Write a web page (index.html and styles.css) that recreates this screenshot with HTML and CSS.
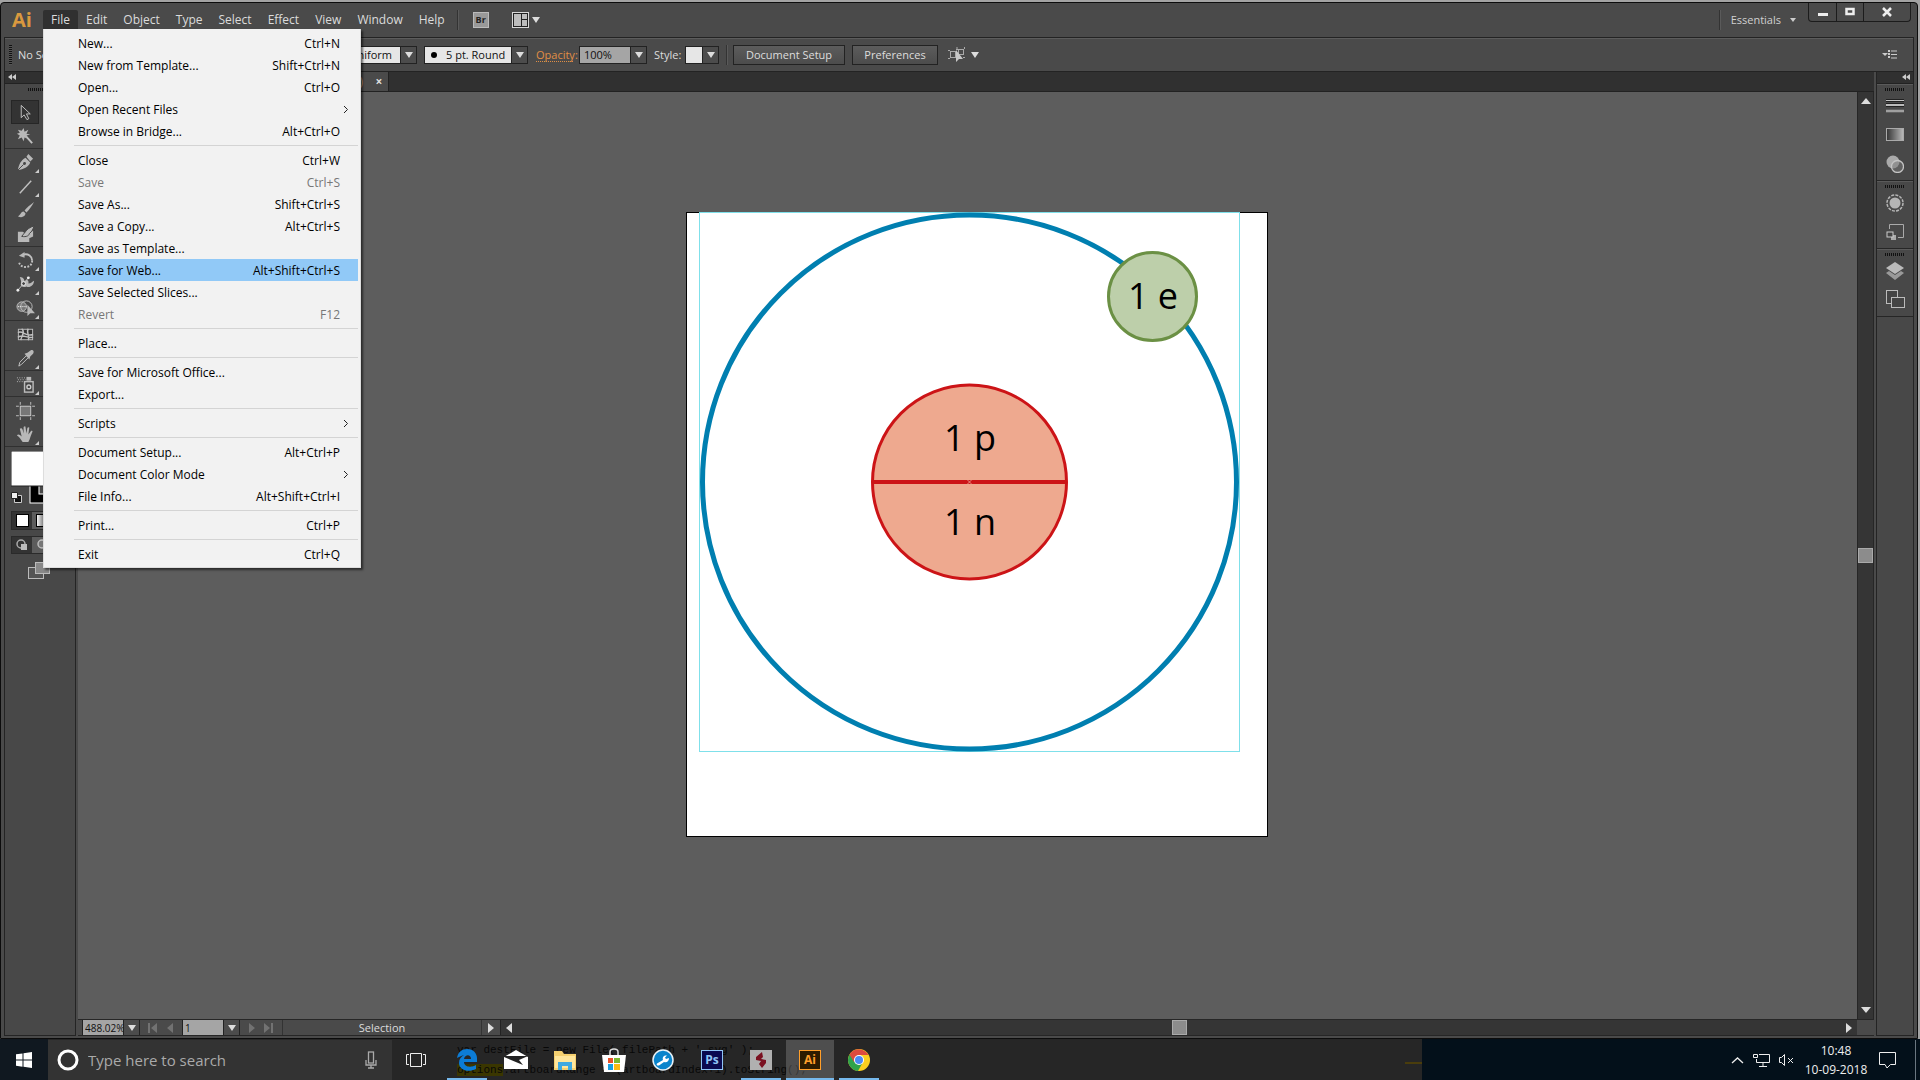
FILE: index.html
```html
<!DOCTYPE html>
<html lang="en">
<head>
<meta charset="utf-8">
<title>Illustrator</title>
<link rel="stylesheet" href="styles.css">
</head>
<body>
<div class="desktop">
<div class="app">
  <header class="menubar">
    <span class="logo">Ai</span>
    <nav class="menus">
      <div class="menu-host">
        <button class="menu-title open">File</button>
        <ul class="dropdown">
          <li><button class="item"><span>New...</span><kbd>Ctrl+N</kbd></button></li>
          <li><button class="item"><span>New from Template...</span><kbd>Shift+Ctrl+N</kbd></button></li>
          <li><button class="item"><span>Open...</span><kbd>Ctrl+O</kbd></button></li>
          <li><button class="item sub"><span>Open Recent Files</span><svg width="6" height="9" viewBox="0 0 6 9"><path d="M1 1l3.500 3.500L1 8"/></svg></button></li>
          <li><button class="item"><span>Browse in Bridge...</span><kbd>Alt+Ctrl+O</kbd></button></li>
          <li class="rule"></li>
          <li><button class="item"><span>Close</span><kbd>Ctrl+W</kbd></button></li>
          <li><button class="item" disabled><span>Save</span><kbd>Ctrl+S</kbd></button></li>
          <li><button class="item"><span>Save As...</span><kbd>Shift+Ctrl+S</kbd></button></li>
          <li><button class="item"><span>Save a Copy...</span><kbd>Alt+Ctrl+S</kbd></button></li>
          <li><button class="item"><span>Save as Template...</span></button></li>
          <li><button class="item active"><span>Save for Web...</span><kbd>Alt+Shift+Ctrl+S</kbd></button></li>
          <li><button class="item"><span>Save Selected Slices...</span></button></li>
          <li><button class="item" disabled><span>Revert</span><kbd>F12</kbd></button></li>
          <li class="rule"></li>
          <li><button class="item"><span>Place...</span></button></li>
          <li class="rule"></li>
          <li><button class="item"><span>Save for Microsoft Office...</span></button></li>
          <li><button class="item"><span>Export...</span></button></li>
          <li class="rule"></li>
          <li><button class="item sub"><span>Scripts</span><svg width="6" height="9" viewBox="0 0 6 9"><path d="M1 1l3.500 3.500L1 8"/></svg></button></li>
          <li class="rule"></li>
          <li><button class="item"><span>Document Setup...</span><kbd>Alt+Ctrl+P</kbd></button></li>
          <li><button class="item sub"><span>Document Color Mode</span><svg width="6" height="9" viewBox="0 0 6 9"><path d="M1 1l3.500 3.500L1 8"/></svg></button></li>
          <li><button class="item"><span>File Info...</span><kbd>Alt+Shift+Ctrl+I</kbd></button></li>
          <li class="rule"></li>
          <li><button class="item"><span>Print...</span><kbd>Ctrl+P</kbd></button></li>
          <li class="rule"></li>
          <li><button class="item"><span>Exit</span><kbd>Ctrl+Q</kbd></button></li>
        </ul>
      </div>
      <button class="menu-title">Edit</button>
      <button class="menu-title">Object</button>
      <button class="menu-title">Type</button>
      <button class="menu-title">Select</button>
      <button class="menu-title">Effect</button>
      <button class="menu-title">View</button>
      <button class="menu-title">Window</button>
      <button class="menu-title">Help</button>
    </nav>
    <span class="vline"></span>
    <button class="bridge" aria-label="Bridge">Br</button>
    <button class="arrange" aria-label="Arrange documents"><svg width="28" height="16" viewBox="0 0 28 16"><rect x="0.500" y="0.500" width="16" height="15" fill="#222" stroke="#d8d8d8"/><rect x="2" y="2" width="7" height="12" fill="#bdbdbd"/><rect x="10" y="2" width="5" height="5" fill="#bdbdbd"/><rect x="10" y="8" width="5" height="6" fill="#bdbdbd"/><path d="M20 5h8l-4 6z" fill="#ddd"/></svg></button>
    <span class="spacer"></span>
    <span class="vline"></span>
    <button class="workspace">Essentials<i class="tri small"></i></button>
    <div class="winbtns">
      <button aria-label="Minimize"><svg width="10" height="10" viewBox="0 0 10 10"><path d="M0 6h10v3H0z" fill="#eee"/></svg></button>
      <button class="max" aria-label="Maximize"><svg width="10" height="10" viewBox="0 0 10 10"><path d="M1.500 2h7v5h-7z" fill="none" stroke="#eee" stroke-width="2.500"/></svg></button>
      <button class="close" aria-label="Close"><svg width="10" height="10" viewBox="0 0 10 10"><path d="M1 1l8 8M9 1L1 9" stroke="#eee" stroke-width="2.500"/></svg></button>
    </div>
  </header>

  <section class="control">
    <span class="vgrip"></span>
    <span class="selection-label">No Selection</span>
    <div class="combo profile"><select aria-label="Profile"><option>Uniform</option></select><i class="drop"></i></div>
    <div class="combo brush"><b class="dot"></b><select aria-label="Brush"><option>5 pt. Round</option></select><i class="drop"></i></div>
    <a class="opacity" href="#">Opacity:</a>
    <div class="combo percent"><input aria-label="Opacity" value="100%"><i class="drop"></i></div>
    <span class="style-label">Style:</span>
    <div class="combo swatch"><button aria-label="Style"></button><i class="drop"></i></div>
    <span class="vline"></span>
    <button class="btn setup">Document Setup</button>
    <button class="btn prefs">Preferences</button>
    <button class="align" aria-label="Select similar"><svg width="31" height="18" viewBox="0 0 31 18"><g fill="none" stroke="#aaa"><rect x="2.500" y="5.500" width="5" height="6"/><rect x="10.500" y="3.500" width="5" height="5"/><path d="M0 4.500h2M0 12.500h2M8 3.500h2M9 1v2M16.500 1v2M15 11.500h2"/></g><path d="M8 4v12l3-3h4z" fill="#c8c8c8"/><path d="M23 6h8l-4 6z" fill="#ddd"/></svg></button>
    <span class="spacer"></span>
    <button class="panelmenu" aria-label="Panel menu"><svg width="15" height="9" viewBox="0 0 15 9"><path d="M0 3h6L3 6z" fill="#ccc"/><path d="M7 0v9" stroke="#ccc" stroke-width="2" stroke-dasharray="2 1"/><path d="M9 1h6M9 4.500h6M9 8h6" stroke="#ccc"/></svg></button>
  </section>

  <main class="work">
    <aside class="tools">
      <div class="dockhead"><svg width="8" height="6" viewBox="0 0 8 6"><path d="M4 0L0 3l4 3zM8 0L4 3l4 3z"/></svg></div>
      <div class="hgrip"></div>
      <div class="group">
        <button class="tool on" aria-label="Selection"><svg viewBox="0 0 20 20"><path d="M5.500 2.500v13l3-3 3 5 2-1-2.500-5H15z" fill="#333" stroke="#c4c4c4"/></svg></button>
        <button class="tool" aria-label="Magic wand"><svg viewBox="0 0 20 20"><path d="M9 8l8 9" stroke-width="2" class="s"/><path class="f" d="M8 1l1 4 4-2-2 4 4 1-4 1 1 3-3-1-1 4-2-4-4 2 2-4-3-2 3-1-2-3 4 1z"/></svg></button>
      </div>
      <div class="group">
        <button class="tool more" aria-label="Pen"><svg viewBox="0 0 20 20"><path class="f" d="M2 18C3 12 5 8 10 5l5 5c-2 5-7 7-13 8zM11 4l2-3 5 5-3 3z"/><path d="M2 18l6-6" stroke="#444"/><circle cx="9" cy="11" r="1.500" fill="#444"/></svg></button>
        <button class="tool more" aria-label="Line"><svg viewBox="0 0 20 20"><path class="s" d="M4 17L16 4" stroke-width="1.500"/></svg></button>
        <button class="tool" aria-label="Paintbrush"><svg viewBox="0 0 20 20"><path class="f" d="M19 1c-4 3-8 6-10 9l2 2c3-3 6-7 8-11zM8 11c-3 0-3 4-6 5 3 2 8 1 8-3z"/></svg></button>
        <button class="tool" aria-label="Blob brush"><svg viewBox="0 0 20 20"><path class="f" d="M2 7h5l3 2h3l5-3v6l-4 2v4H2z"/><path d="M19 1c-4 1-8 4-9 6-1 2-3 3-4 5 5 1 8-1 8-3 3-2 4-5 5-8z" fill="#bbb" stroke="#444"/></svg></button>
      </div>
      <div class="group">
        <button class="tool more" aria-label="Rotate"><svg viewBox="0 0 20 20"><path class="s" d="M7 4c6-2 10 2 10 6" stroke-width="2"/><path class="s" d="M17 10c0 9-13 9-14 1" stroke-width="2" stroke-dasharray="2 1.500"/><path class="f" d="M3 5l6-4v6z"/></svg></button>
        <button class="tool more" aria-label="Width"><svg viewBox="0 0 20 20"><path class="f" d="M4 2c4 0 5 3 5 5 2-3 5-2 4 2 3 0 4-2 6-3 0 5-5 8-8 6-2 1-6 1-6-2 1-3 0-5-1-8z"/><path class="s" d="M2 16L13 3"/><circle cx="8" cy="9" r="2" fill="#444" stroke="#eee"/><circle cx="2" cy="16" r="1.500" fill="#eee"/><circle cx="13" cy="3" r="1.500" fill="#eee"/></svg></button>
        <button class="tool more" aria-label="Shape builder"><svg viewBox="0 0 20 20"><circle cx="6" cy="8" r="5" fill="#777" stroke="#bbb"/><circle cx="11" cy="8" r="6" fill="none" stroke="#bbb"/><path d="M2 8h9" stroke="#fff" stroke-dasharray="1 1"/><path class="f" d="M12 6v12l3-3h5z"/></svg></button>
      </div>
      <div class="group">
        <button class="tool" aria-label="Mesh"><svg viewBox="0 0 20 20"><rect x="2.500" y="4.500" width="15" height="11" fill="#333" stroke="#bbb"/><path class="s" d="M2 8c5-3 8 5 16 2M2 13c5-4 9 1 16 0M6 4c4 3 0 7-1 12M13 4c-3 4 2 7 0 12" stroke-width="1.500"/></svg></button>
        <button class="tool more" aria-label="Eyedropper"><svg viewBox="0 0 20 20"><path d="M3 18l1-4 7-7 2 2-7 7z" fill="#444" stroke="#c4c4c4"/><path class="f" d="M9 5l3-1 4-3c3 0 3 2 2 4l-3 3-1 3z"/></svg></button>
      </div>
      <div class="group">
        <button class="tool more" aria-label="Symbol sprayer"><svg viewBox="0 0 20 20"><rect x="9" y="7" width="9" height="11" fill="#444" stroke="#bbb" stroke-width="1.500"/><circle cx="13.500" cy="12.500" r="2" fill="none" stroke="#ccc" stroke-width="1.500"/><path class="f" d="M11 2h5v4h-5z"/><path d="M1 3h9M2 5h8M1 7h6" stroke="#bbb" stroke-dasharray="1 1.500"/></svg></button>
      </div>
      <div class="group">
        <button class="tool" aria-label="Artboard"><svg viewBox="0 0 20 20"><rect x="4.500" y="5.500" width="11" height="10" fill="#777" stroke="#ccc"/><path class="s" d="M4.500 1v3M15.500 1v3M4.500 17v3M15.500 17v3M0 5.500h3M17 5.500h3M0 15.500h3M17 15.500h3"/></svg></button>
        <button class="tool more" aria-label="Hand"><svg viewBox="0 0 20 20"><path class="f" d="M7 18C5 15 3 12 1 11c1-2 3-1 5 1L4 4c1-1 2-1 3 1l1 4V2c1-1 2-1 2 0l1 7 1-6c1-1 2-1 2 0l-1 7 3-4c1 0 2 0 1 2-2 4-2 7-4 10z"/></svg></button>
      </div>
      <div class="paint">
        <svg width="56" height="54" viewBox="0 0 56 54"><rect x="19" y="18" width="34" height="34" fill="#000" stroke="#fff"/><rect x="28" y="27" width="16" height="16" fill="#484848" stroke="#fff"/><rect x="0" y="0" width="35" height="35" fill="#fff" stroke="#222"/><path d="M3.500 44.500h7v7h-7z" fill="#111" stroke="#ccc"/><path d="M0.500 41.500h6v6h-6z" fill="#eee" stroke="#222"/></svg>
      </div>
      <div class="modes">
        <button aria-label="Color"><svg width="13" height="13"><rect x="0.500" y="0.500" width="12" height="12" fill="#fff" stroke="#000"/></svg></button>
        <button class="lit" aria-label="Gradient"><svg width="13" height="13"><defs><linearGradient id="gm"><stop stop-color="#fff"/><stop offset="1" stop-color="#222"/></linearGradient></defs><rect x="0.500" y="0.500" width="12" height="12" fill="url(#gm)" stroke="#000"/></svg></button>
      </div>
      <div class="modes second">
        <button aria-label="Draw normal"><svg width="12" height="12"><circle cx="5" cy="5" r="4" fill="none" stroke="#aaa" stroke-width="1.500"/><rect x="5" y="5" width="6" height="6" fill="#bbb"/></svg></button>
        <button class="lit" aria-label="Draw behind"><svg width="12" height="12"><circle cx="6" cy="5" r="4" fill="#777" stroke="#bbb" stroke-width="1.500"/></svg></button>
      </div>
      <button class="screenmode" aria-label="Screen mode"><svg width="22" height="17" viewBox="0 0 22 17"><rect x="0.500" y="5.500" width="15" height="11" fill="#555" stroke="#bbb"/><rect x="7.500" y="0.500" width="14" height="11" fill="#888" stroke="#bbb"/></svg></button>
    </aside>

    <section class="document">
      <div class="tabs"><div class="tab"><span class="tabname">(RGB/Preview)</span><button aria-label="Close tab">×</button></div></div>
      <div class="canvas-row">
        <div class="canvas">
          <svg class="art" width="584" height="628" viewBox="0 0 584 628">
            <rect x="0.500" y="0.500" width="581" height="624" fill="#fff" stroke="#000"/>
            <rect x="13.500" y="0.500" width="540" height="539" fill="none" stroke="#7fe0ea"/>
            <circle cx="283.500" cy="270" r="267" fill="none" stroke="#007fb0" stroke-width="5"/>
            <circle cx="283.500" cy="270" r="97" fill="#eea98f" stroke="#cc1417" stroke-width="3"/>
            <path d="M186 270h195" stroke="#cc1417" stroke-width="4"/>
            <path d="M281.500 268l4 4M285.500 268l-4 4" stroke="#f3d0c0" stroke-width="0.600"/>
            <circle cx="466.500" cy="84.500" r="44" fill="#bdcfaa" stroke="#6b9044" stroke-width="3"/>
            <text x="284" y="239">1 p</text>
            <text x="284" y="323">1 n</text>
            <text x="467" y="97">1 e</text>
          </svg>
        </div>
        <div class="vscroll"><i class="up"></i><span class="thumb"></span><i class="down"></i></div>
      </div>
      <footer class="status">
        <div class="combo zoomlevel"><input aria-label="Zoom" value="488.02%"><i class="drop"></i></div>
        <div class="nav"><svg width="26" height="10" viewBox="0 0 26 10"><path d="M0 0h2v10H0zM9 0v10L3 5zM25 0v10l-6-5z"/></svg></div>
        <div class="combo page"><input aria-label="Artboard number" value="1"><i class="drop"></i></div>
        <div class="nav"><svg width="26" height="10" viewBox="0 0 26 10"><path d="M1 0v10l6-5zM16 0v10l6-5zM23 0h2v10h-2z"/></svg></div>
        <div class="info">Selection</div>
        <button class="infobtn" aria-label="Status menu"><i class="right"></i></button>
        <div class="hscroll"><i class="left"></i><span class="thumb"></span><i class="right"></i></div>
        <span class="corner"></span>
      </footer>
    </section>

    <aside class="dock">
      <div class="dockhead"><svg width="8" height="6" viewBox="0 0 8 6"><path d="M4 0L0 3l4 3zM8 0L4 3l4 3z"/></svg></div>
      <div class="panelgroup">
        <span class="hgrip"></span>
        <button aria-label="Stroke"><svg width="18" height="14" viewBox="0 0 18 14"><path d="M0 1h18M0 6h18M0 12h18" stroke="#222" stroke-width="4"/><path d="M0 1.500h18" stroke="#c4c4c4"/><path d="M0 6h18" stroke="#bbb" stroke-width="2"/><path d="M0 12h18" stroke="#a0a0a0" stroke-width="3"/></svg></button>
        <button aria-label="Gradient"><svg width="18" height="14" viewBox="0 0 18 14"><defs><linearGradient id="gd"><stop stop-color="#333"/><stop offset="1" stop-color="#bbb"/></linearGradient></defs><rect x="0.500" y="0.500" width="17" height="12" fill="url(#gd)" stroke="#aaa"/></svg></button>
        <button aria-label="Transparency"><svg width="18" height="18" viewBox="0 0 18 18"><circle cx="7" cy="7" r="6.500" fill="#aaa"/><circle cx="11.500" cy="11.500" r="6" fill="#777" fill-opacity=".5" stroke="#c4c4c4" stroke-width="1.300"/></svg></button>
      </div>
      <div class="panelgroup">
        <span class="hgrip"></span>
        <button aria-label="Appearance"><svg width="18" height="18" viewBox="0 0 18 18"><circle cx="9" cy="9" r="5.500" fill="#b4b4b4"/><circle cx="9" cy="9" r="8" fill="none" stroke="#b4b4b4" stroke-width="1.500" stroke-dasharray="3 1.200"/></svg></button>
        <button aria-label="Graphic styles"><svg width="18" height="18" viewBox="0 0 18 18"><path d="M3.500 6V1.500h14v13H12" fill="none" stroke="#aaa"/><path d="M5 12h5v5H5z" fill="#aaa"/><rect x="1" y="9" width="6" height="5" fill="#444" stroke="#ccc"/></svg></button>
      </div>
      <div class="panelgroup">
        <span class="hgrip"></span>
        <button aria-label="Layers"><svg width="18" height="18" viewBox="0 0 18 18"><path d="M9 0l9 6-9 6-9-6z" fill="#bbb"/><path d="M0 11l3-2 6 4 6-4 3 2-9 7z" fill="#9a9a9a"/></svg></button>
        <button aria-label="Artboards"><svg width="19" height="19" viewBox="0 0 19 19"><rect x="0.500" y="0.500" width="11" height="13" fill="#444" stroke="#bbb"/><rect x="5.500" y="7.500" width="13" height="10" fill="#444" stroke="#bbb"/></svg></button>
      </div>
    </aside>
  </main>
</div>

<footer class="taskbar">
  <pre class="behind">var destFile = new File( filePath + '.svg' );
<mark>options</mark>.artboardRange = (artboardIndex+1).toString();</pre>
  <button class="start" aria-label="Start"><svg width="16" height="16" viewBox="0 0 16 16"><path d="M0 2.300L6.500 1.400v6.200H0zM7.500 1.200L16 0v7.600H7.500zM0 8.500h6.500v6.200L0 13.800zM7.500 8.500H16V16l-8.500-1.200z" fill="#fff"/></svg></button>
  <label class="search">
    <svg width="22" height="22" viewBox="0 0 22 22"><circle cx="11" cy="11" r="9" fill="none" stroke="#fff" stroke-width="3"/></svg>
    <input placeholder="Type here to search">
    <svg width="12" height="18" viewBox="0 0 12 18"><g fill="none" stroke="#aaa" stroke-width="1.300"><rect x="3.500" y="1" width="5" height="11"/><path d="M1 9v5h10V9M6 14v3M3 17h6"/></g></svg>
  </label>
  <div class="apps">
    <button class="app-btn" aria-label="Task view"><svg width="20" height="16" viewBox="0 0 20 16"><path d="M4.500 1.500h11v13h-11zM3 2.500H.5v10H3M17 2.500h2.500v10H17" fill="none" stroke="#eee"/></svg></button>
    <button class="app-btn run" aria-label="Edge"><svg width="20" height="22" viewBox="0 0 20 22"><path d="M0 9C1 3 5 0 10 0c7 0 10 5 10 9v4H7c0 5 7 6 12 3v4C11 24 2 21 2 14c0-4 2-6 5-8-3 1-5 2-7 3zm7 1h7c0-5-6-5-7 0z" fill="#0c7cd6"/></svg></button>
    <button class="app-btn" aria-label="Mail"><svg width="24" height="20" viewBox="0 0 24 20"><path d="M0 7l12-7 12 7v12H0z" fill="#fff"/><path d="M0 6h24l-9 4 4 5L0 7z" fill="#222"/></svg></button>
    <button class="app-btn" aria-label="File Explorer"><svg width="22" height="19" viewBox="0 0 22 19"><path d="M0 0h8l2 3h12v16H0z" fill="#f5d06f"/><path d="M1 5h20v12H1z" fill="#ffe69b"/><path d="M4 19V11h14v8h-4v-4H8v4z" fill="#40a9e0"/></svg></button>
    <button class="app-btn" aria-label="Store"><svg width="24" height="24" viewBox="0 0 24 24"><path d="M8 7V4c0-4 8-4 8 0v3" fill="none" stroke="#ddd" stroke-width="1.500"/><path d="M0 7h24l-2 17H2z" fill="#fff"/><path d="M6 10h5v5H6z" fill="#e8512a"/><path d="M12 10h6v5h-6z" fill="#7cb82f"/><path d="M6 16h5v6H6z" fill="#1a9fe0"/><path d="M12 16h6v6h-6z" fill="#fdb913"/></svg></button>
    <button class="app-btn" aria-label="Support tool"><svg width="22" height="22" viewBox="0 0 22 22"><circle cx="11" cy="11" r="10" fill="#0a84cc" stroke="#e8f2f8" stroke-width="1.500"/><path d="M5 14.500L11 11c-1-3 1-5 4-4.500l-2 2 1 1.500 3-1c0 3-2 5-5 4l-5 3.500c-2 .500-3-1-2-2z" fill="#fff"/></svg></button>
    <button class="app-btn" aria-label="Photoshop"><span class="tile ps">Ps</span></button>
    <button class="app-btn run" aria-label="ExtendScript Toolkit"><svg width="22" height="20" viewBox="0 0 22 20"><rect width="22" height="20" fill="#b0b0b0"/><path d="M12 2l-6 5v3l5 1-2 3 3 4 4-5v-3l-5-1 2-2z" fill="#7a1020"/></svg></button>
    <button class="app-btn run current" aria-label="Illustrator"><span class="tile ai">Ai</span></button>
    <button class="app-btn run" aria-label="Chrome"><svg width="22" height="22" viewBox="0 0 22 22"><circle cx="11" cy="11" r="11" fill="#f9cf1f"/><path d="M11 11L1.500 5.500A11 11 0 0 0 10 22l5-9z" fill="#2fa34c"/><path d="M1.500 5.500A11 11 0 0 1 20.500 6H11L6 13z" fill="#dd4b3e"/><circle cx="11" cy="11" r="5" fill="#fff"/><circle cx="11" cy="11" r="4" fill="#4a8af4"/></svg></button>
  </div>
  <div class="tray">
    <svg width="13" height="7" viewBox="0 0 13 7"><path d="M1 6l5.500-5L12 6" fill="none" stroke="#eee" stroke-width="1.300"/></svg>
    <svg width="17" height="14" viewBox="0 0 17 14"><path d="M6 1.500h10.500v8H3.500V6M10 10v3M6 13.500h8M.5 1.500h4v3h-4z" fill="none" stroke="#eee"/></svg>
    <svg width="15" height="12" viewBox="0 0 15 12"><path d="M.5 3.500h2l3-3v11l-3-3h-2zM9 4l5 5M14 4L9 9" fill="none" stroke="#eee"/></svg>
    <div class="clock"><span>10:48</span><span>10-09-2018</span></div>
    <svg width="17" height="17" viewBox="0 0 17 17"><path d="M.5.500h16v12h-5L8 16l-2-3.500H.5z" fill="none" stroke="#eee"/></svg>
    <span class="peek"></span>
  </div>
</footer>
</div>
</body>
</html>
```
FILE: styles.css
```css
* { box-sizing: border-box; }

body {
  margin: 0;
  font-family: "Open Sans", "Noto Sans", sans-serif;
  font-size: 12px;
  color: #ddd;
  overflow: hidden;
}

button, input, select {
  font: inherit;
  color: inherit;
  background: none;
  border: 0;
  border-radius: 0;
  padding: 0;
  margin: 0;
  min-width: 0;
  outline: 0;
}

svg { display: block; flex: none; }
.spacer { flex: 1; }

.desktop {
  display: flex;
  flex-direction: column;
  height: 100vh;
  background: #a3a3a3;
}

.app {
  flex: 1;
  min-height: 0;
  display: flex;
  flex-direction: column;
  margin: 2px 2px 0 0;
  border: 1px solid #0c0c0c;
  border-radius: 4px 4px 0 0;
  background: #4a4a4a;
  padding: 0 3px 2px;
}

/* Menu bar */
.menubar {
  display: flex;
  align-items: center;
  height: 34px;
  padding-bottom: 1px;
}
.logo {
  width: 39px;
  padding-left: 8px;
  font: bold 20px/20px "Open Sans", sans-serif;
  color: #d9993f;
}
.menus { display: flex; }
.menu-host { position: relative; }
.menu-title { display: block; height: 19px; line-height: 19px; padding: 0 8px; color: #dcdcdc; }
.menu-title.open { background: #303030; border-radius: 2px 2px 0 0; }
.vline { width: 1px; height: 20px; background: #333; box-shadow: 1px 0 #5a5a5a; }
.menus + .vline { margin-left: 4px; }
.bridge {
  width: 16px;
  height: 16px;
  margin: 0 23px 0 15px;
  background: #999;
  border: 1px solid #bbb;
  color: #222;
  font: bold 9px/13px "Open Sans", sans-serif;
}
.workspace { display: flex; align-items: center; gap: 9px; margin: 0 12px 0 11px; color: #d0d0d0; font-size: 11px; }
.winbtns {
  display: flex;
  align-self: flex-start;
  height: 19px;
  margin-right: 3px;
  border: 1px solid #1c1c1c;
  border-top: 0;
  border-radius: 0 0 4px 4px;
}
.winbtns button { width: 28px; display: flex; justify-content: center; align-items: center; border-right: 1px solid #1c1c1c; }
.winbtns .max { width: 27px; }
.winbtns .close { width: 46px; border-right: 0; }

/* Arrow glyphs */
.tri.small, .drop::before { content: ""; display: block; border: solid transparent; border-width: 4px 3px 0; border-top-color: #ccc; }
.drop { width: 16px; flex: none; display: flex; align-items: center; justify-content: center; background: #4c4c4c; border-left: 1px solid #222; }
.drop::before { border-width: 6px 4px 0; border-top-color: #ddd; }
.up, .down, .left, .right { display: block; width: 0; height: 0; border: solid transparent; }
.up { border-width: 0 5px 6px; border-bottom-color: #ddd; }
.down { border-width: 6px 5px 0; border-top-color: #ddd; }
.left { border-width: 5px 6px 5px 0; border-right-color: #ddd; }
.right { border-width: 5px 0 5px 6px; border-left-color: #ddd; }

/* File menu */
.dropdown {
  position: absolute;
  z-index: 10;
  top: 100%;
  left: 0;
  width: 318px;
  margin: 0;
  padding: 3px 2px 2px;
  list-style: none;
  background: #f2f2f2;
  border: 1px solid #ddd;
  border-width: 0 1px 1px;
  box-shadow: 2px 2px 2px #0008;
  color: #000;
}
.item { display: flex; justify-content: space-between; align-items: center; width: 100%; height: 22px; padding: 0 18px 0 32px; color: #000; }
.item kbd { font: inherit; }
.item.sub { padding-right: 9px; }
.item svg { fill: none; stroke: #222; }
.item.active { background: #91c9f7; }
.item:disabled { color: #777; }
.rule { height: 1px; margin: 3px 0 3px 28px; background: #d4d4d4; }

/* Control bar */
.control {
  display: flex;
  align-items: center;
  height: 35px;
  font-size: 11px;
  border: 1px solid #232323;
  box-shadow: inset 0 1px #5c5c5c;
  background: #4a4a4a;
}
.vgrip { width: 3px; height: 20px; margin: 0 6px 0 4px; background: repeating-linear-gradient(#111 0 1px, #555 1px 2px); }
.selection-label { width: 262px; }
.combo { display: flex; height: 18px; border: 1px solid #222; background: #e6e6e6; color: #111; }
.combo select, .combo input { flex: 1; width: 0; appearance: none; }
.profile { width: 137px; margin-right: 7px; }
.profile select { text-align-last: right; padding-right: 8px; }
.brush { width: 104px; margin-right: 8px; }
.dot { width: 6px; height: 6px; margin: 5px 9px 0 6px; border-radius: 3px; background: #000; }
.opacity { color: #e08e45; text-decoration: none; border-bottom: 1px dotted #e08e45; line-height: 13px; margin-right: 6px; width: 37px; white-space: nowrap; }
.percent { width: 68px; background: #a5a5a5; margin-right: 7px; }
.percent input { padding-left: 4px; }
.style-label { width: 31px; }
.swatch { width: 34px; margin-right: 7px; }
.swatch button { flex: 1; }
.btn { height: 20px; border: 1px solid #222; background: linear-gradient(#5c5c5c, #4c4c4c); color: #ddd; }
.setup { width: 112px; margin: 0 7px 0 6px; }
.prefs { width: 86px; margin-right: 10px; }
.panelmenu { margin-right: 16px; }

/* Work area */
.work { flex: 1; min-height: 0; display: flex; }
.tools, .dock { border: solid #242424; border-width: 0 1px 1px; background: #484848; }
.tools { width: 72px; margin-right: 2px; }
.dock { width: 38px; margin-left: 2px; }
.dockhead { height: 12px; padding: 2px 3px; background: #303030; border-bottom: 1px solid #222; }
.dockhead svg { fill: #ccc; }
.dock .dockhead { display: flex; justify-content: flex-end; }
.hgrip { display: block; height: 3px; background: repeating-linear-gradient(90deg, #111 0 1px, #484848 1px 2px); }
.tools .hgrip { width: 24px; margin: 4px auto 9px; }
.group { display: flex; flex-direction: column; padding-left: 6px; margin: 0 5px 1px 0; border-bottom: 1px solid #303030; }
.tool { position: relative; width: 28px; height: 24px; display: flex; align-items: center; justify-content: center; }
.tool svg { width: 19px; height: 19px; }
.tool.on { background: #333; border: 1px solid #262626; }
.tool.more::after { content: ""; position: absolute; right: 0; bottom: 1px; border: solid transparent; border-width: 0 0 4px 4px; border-bottom-color: #ccc; }
.f { fill: #b8b8b8; }
.s { fill: none; stroke: #c0c0c0; }
.paint { padding: 3px 0 0 6px; }
.modes { display: flex; width: 56px; height: 19px; margin: 6px 0 0 6px; background: #333; border: 1px solid #2a2a2a; }
.modes button { width: 20px; display: flex; align-items: center; justify-content: center; }
.modes .lit { background: #5c5c5c; }
.modes.second { height: 18px; }
.screenmode { display: block; margin: 8px 0 0 23px; }

.document { flex: 1; min-width: 0; display: flex; flex-direction: column; }
.tabs { display: flex; height: 20px; background: #303030; border-bottom: 1px solid #222; }
.tab { width: 311px; display: flex; align-items: center; justify-content: flex-end; background: #4a4a4a; border-right: 1px solid #222; color: #c8a27c; }
.tab button { width: 10px; margin: 0 4px 0 11px; color: #ddd; font-weight: bold; font-size: 12px; line-height: 16px; }
.canvas-row { flex: 1; min-height: 0; display: flex; }
.canvas { flex: 1; position: relative; overflow: hidden; background: #5d5d5d; }
.art { position: absolute; left: 608px; top: 120px; }
.art text { font-family: "Open Sans", sans-serif; font-size: 36px; text-anchor: middle; }
.vscroll { width: 17px; display: flex; flex-direction: column; align-items: center; justify-content: space-between; padding: 6px 0; background: #353535; border: solid #262626; border-width: 0 1px; }
.thumb { width: 15px; height: 15px; background: #8c8c8c; border: 1px solid #aaa; }

.status { display: flex; align-items: center; height: 17px; padding-left: 4px; border-top: 1px solid #262626; border-bottom: 1px solid #262626; background: #4a4a4a; font-size: 11px; }
.status .combo { height: 15px; background: #a5a5a5; border-width: 0 1px; font-size: 10px; }
.zoomlevel, .page { width: 58px; }
.zoomlevel input, .page input { padding-left: 2px; }
.nav { width: 42px; display: flex; justify-content: center; }
.nav svg { fill: #727272; }
.info { width: 200px; text-align: center; border: solid #333; border-width: 0 1px; line-height: 15px; }
.infobtn { width: 18px; display: flex; justify-content: center; }
.hscroll { flex: 1; height: 15px; display: flex; align-items: center; justify-content: space-between; padding: 0 5px; background: #353535; border-left: 1px solid #222; }
.corner { width: 17px; }

.panelgroup { display: flex; flex-direction: column; align-items: center; padding: 4px 0 2px; border-bottom: 1px solid #262626; box-shadow: inset 0 1px #5a5a5a; }
.panelgroup .hgrip { width: 20px; }
.panelgroup button { height: 29px; display: flex; align-items: center; }

/* Taskbar */
.taskbar {
  position: relative;
  display: flex;
  height: 41px;
  padding-top: 1px;
  background:
    linear-gradient(#4a3d0c, #4a3d0c) 1405px 23px / 17px 2px no-repeat,
    linear-gradient(90deg, #101820 0 48px, #262626 48px 1422px, #03101a 1422px);
}
.behind { position: absolute; left: 457px; top: 1px; margin: 0; font: 11px/20px "Liberation Mono", monospace; color: #080808; }
.behind mark { background: #3a3600; color: #080808; }
.start { width: 48px; display: flex; align-items: center; justify-content: center; }
.search { display: flex; align-items: center; width: 344px; padding: 0 15px 0 9px; background: #333; }
.search input { flex: 1; padding-left: 9px; font-size: 15px; color: #aaa; }
.search input::placeholder { color: #aaa; }
.apps { position: relative; display: flex; gap: 1px; }
.app-btn { width: 48px; display: flex; align-items: center; justify-content: center; border-top: 2px solid transparent; border-bottom: 2px solid transparent; }
.app-btn:first-child { margin-right: 2px; }
.run { border-image: linear-gradient(90deg, transparent 4px, #76b9ed 4px 44px, transparent 44px) 0 0 2; }
.current { background: #ffffff30; border-image: none; border-bottom-color: #76b9ed; }
.tile { display: block; width: 22px; height: 20px; border: 1px solid; font: bold 12px/17px "Open Sans", sans-serif; }
.ps { background: #0a0a50; color: #8fc4f5; }
.ai { background: #2e1c00; color: #ff9f2a; }
.tray { display: flex; align-items: center; margin-left: auto; }
.tray svg { margin-right: 9px; }
.clock { display: flex; flex-direction: column; align-items: center; width: 66px; line-height: 19px; color: #eee; margin-right: 10px; }
.peek { width: 1px; align-self: stretch; background: #6a7680; margin: 0 4px 0 10px; }
```
